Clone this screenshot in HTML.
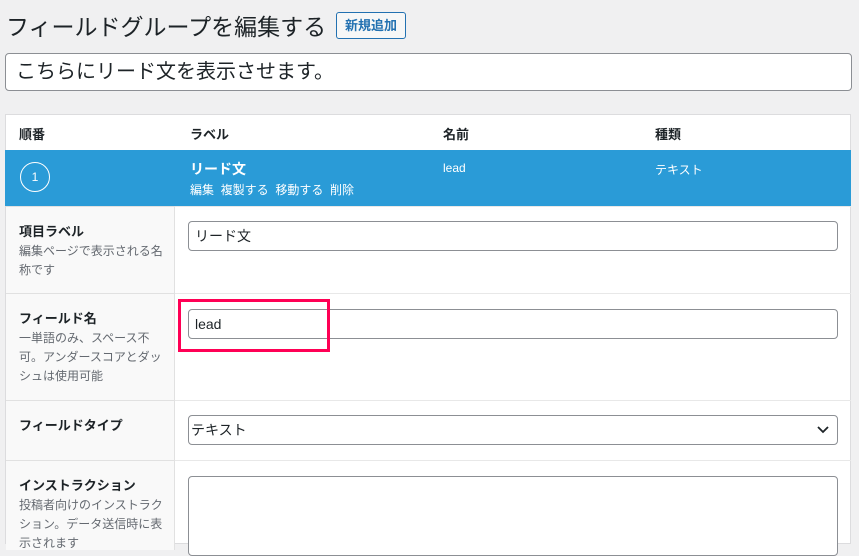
<!DOCTYPE html><html><head><meta charset="utf-8"><style>
body{margin:0;width:859px;height:539px;background:#f0f0f1;font-family:"Liberation Sans","Noto Sans CJK JP",sans-serif;color:#1d2327;position:relative;overflow:hidden}
.a{position:absolute}
.t{font-size:23px;left:6px;top:8px;color:#1d2327}
.btn{left:336px;top:12px;width:68px;height:25px;border:1px solid #2271b1;border-radius:3px;color:#2271b1;font-size:13px;font-weight:bold;text-align:center;line-height:25px;background:#f6f7f7}
.inp{left:5px;top:53px;width:845px;height:36px;border:1px solid #8c8f94;border-radius:4px;background:#fff;font-size:20px;line-height:36px;padding-left:10px;box-sizing:border-box;width:847px;height:38px}
.panel{left:5px;top:114px;width:846px;height:430px;background:#fff;border:1px solid #dcdcde;box-sizing:border-box}
.h{top:124px;font-size:13px;font-weight:bold}
.blue{left:5px;top:150px;width:846px;height:56px;background:#2a9bd7}
.circ{left:20px;top:162px;width:28px;height:28px;border:1.5px solid #fff;border-radius:50%;color:#fff;font-size:12px;text-align:center;line-height:28px}
.w{color:#fff}
.lc{left:6px;width:169px;background:#f9f9f9;border-right:1px solid #e1e1e1;border-top:1px solid #e1e1e1;box-sizing:border-box;padding:14px 0 0 13px}
.lc b{font-size:13px;display:block;margin-bottom:2px}
.lc span{font-size:12px;color:#646970;line-height:19px;display:block;width:150px}
.rl{left:175px;width:676px;border-top:1px solid #e8e8e8}
.f{left:188px;width:650px;height:30px;border:1px solid #8c8f94;border-radius:4px;background:#fff;box-sizing:border-box;font-size:14px;line-height:28px;padding-left:6px}
</style></head><body>
<div class="a t">フィールドグループを編集する</div>
<div class="a btn">新規追加</div>
<div class="a inp">こちらにリード文を表示させます。</div>
<div class="a panel"></div>
<div class="a h" style="left:19px;color:#1d2327">順番</div>
<div class="a h" style="left:190px">ラベル</div>
<div class="a h" style="left:443px">名前</div>
<div class="a h" style="left:655px">種類</div>
<div class="a blue"></div>
<div class="a circ">1</div>
<div class="a w" style="left:190px;top:159px;font-size:14px;font-weight:bold">リード文</div>
<div class="a w" style="left:190px;top:181px;font-size:12px">編集&nbsp; 複製する&nbsp; 移動する&nbsp; 削除</div>
<div class="a w" style="left:443px;top:161px;font-size:12px">lead</div>
<div class="a w" style="left:655px;top:161px;font-size:12px">テキスト</div>
<div class="a lc" style="top:206px;height:87px"><b>項目ラベル</b><span>編集ページで表示される名称です</span></div>
<div class="a rl" style="top:206px;height:1px"></div>
<div class="a f" style="top:221px">リード文</div>
<div class="a lc" style="top:293px;height:107px"><b>フィールド名</b><span>一単語のみ、スペース不可。アンダースコアとダッシュは使用可能</span></div>
<div class="a rl" style="top:293px;height:1px"></div>
<div class="a f" style="top:309px">lead</div>
<div class="a" style="left:178px;top:299px;width:146px;height:47px;border:3px solid #ff0055"></div>
<div class="a lc" style="top:400px;height:60px"><b>フィールドタイプ</b></div>
<div class="a rl" style="top:400px;height:1px"></div>
<div class="a f" style="top:415px;padding-left:2px">テキスト<svg style="position:absolute;right:8px;top:10px" width="12" height="8" viewBox="0 0 12 8"><path d="M1 1l5 5 5-5" fill="none" stroke="#1d2327" stroke-width="1.8"/></svg></div>
<div class="a lc" style="top:460px;height:90px"><b>インストラクション</b><span>投稿者向けのインストラクション。データ送信時に表示されます</span></div>
<div class="a rl" style="top:460px;height:1px"></div>
<div class="a f" style="top:476px;height:80px"></div>
</body></html>
